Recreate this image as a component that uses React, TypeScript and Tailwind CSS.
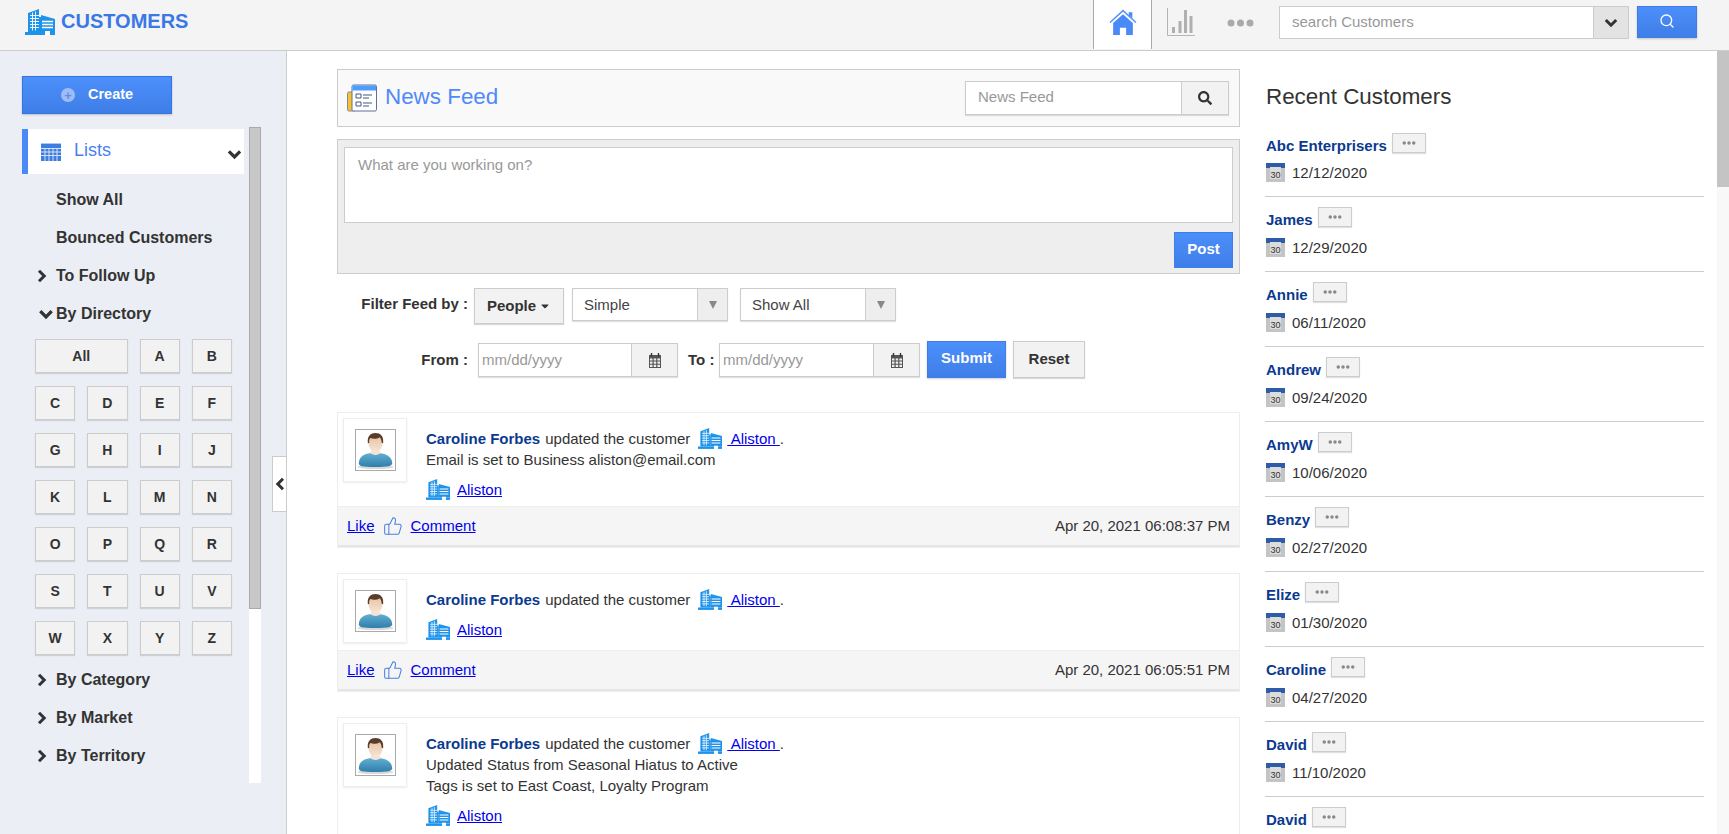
import { Search, ThumbsUp } from 'lucide-react'
import { FaSearch, FaCaretDown } from 'react-icons/fa'

const rows = [
  ['All', 'A', 'B'],
  ['C', 'D', 'E', 'F'],
  ['G', 'H', 'I', 'J'],
  ['K', 'L', 'M', 'N'],
  ['O', 'P', 'Q', 'R'],
  ['S', 'T', 'U', 'V'],
  ['W', 'X', 'Y', 'Z'],
]

const customers = [
  ['Abc Enterprisers', '12/12/2020'],
  ['James', '12/29/2020'],
  ['Annie', '06/11/2020'],
  ['Andrew', '09/24/2020'],
  ['AmyW', '10/06/2020'],
  ['Benzy', '02/27/2020'],
  ['Elize', '01/30/2020'],
  ['Caroline', '04/27/2020'],
  ['David', '11/10/2020'],
  ['David', ''],
]

function ChevronDown({ className }: { className: string }) {
  return (
    <svg viewBox="0 0 14 10" className={className}>
      <path d="M1.800 2 7 7.200 12.200 2" fill="none" stroke="currentColor" strokeWidth="3" />
    </svg>
  )
}

function ChevronRight({ className }: { className: string }) {
  return (
    <svg viewBox="0 0 10 14" className={className}>
      <path d="M2 1.800 7.200 7 2 12.200" fill="none" stroke="currentColor" strokeWidth="3" />
    </svg>
  )
}

function ChevronLeft({ className }: { className: string }) {
  return (
    <svg viewBox="0 0 10 14" className={className}>
      <path d="M8 1.800 2.800 7 8 12.200" fill="none" stroke="currentColor" strokeWidth="3" />
    </svg>
  )
}

function BuildingIcon({ className }: { className: string }) {
  return (
    <svg viewBox="0 0 30 26" className={className}>
      <path d="M3 23V4l11-4v8l2 0v15z" fill="#1f93ea" />
      <path d="M16 6l14 4v13H16z" fill="#1f93ea" />
      <path d="M0 23h30v3H0z" fill="#1f93ea" />
      <path d="M5 6.500h9M5 9.500h9M5 12.500h9M5 15.500h9M5 18.500h9" stroke="#fff" strokeWidth="0.9" />
      <path d="M7.500 3.500v18M10.500 2.500v19" stroke="#fff" strokeWidth="0.9" />
      <path d="M17 12.500h11M17 15.500h11M17 18.500h11" stroke="#fff" strokeWidth="1.300" />
      <path d="M20 22h5v4h-5z" fill="#fff" />
    </svg>
  )
}

function HomeIcon() {
  return (
    <svg viewBox="0 0 27 25" className="w-[28px] h-[26px]">
      <path d="M1 13 13.500 1.500 26 13" fill="none" stroke="#5a94f8" strokeWidth="1.500" />
      <path d="M19 3h3.500v6L19 6z" fill="#4a8af8" />
      <path d="M13.500 5 23 13.500V25h-6.500v-7h-6v7H4V13.500z" fill="#4a8af8" />
    </svg>
  )
}

function BarsIcon() {
  return (
    <svg viewBox="0 0 28 28" className="w-[28px] h-[28px]">
      <path d="M.5 0v27.500H28" fill="none" stroke="#b5b5b5" />
      <path d="M5 19h3v6H5zM11.500 13h3v12h-3zM17 2h3v23h-3zM22.500 8h3v17h-3z" fill="#b0b0b0" />
    </svg>
  )
}

function Dots({ className }: { className: string }) {
  return (
    <svg viewBox="0 0 27 8" className={className}>
      <circle cx="4" cy="4" r="3.500" fill="currentColor" />
      <circle cx="13.500" cy="4" r="3.500" fill="currentColor" />
      <circle cx="23" cy="4" r="3.500" fill="currentColor" />
    </svg>
  )
}

function NewsIcon() {
  return (
    <svg viewBox="0 0 30 28" className="w-[30px] h-[28px]">
      <rect x="0.500" y="8" width="8" height="19" rx="1.500" fill="#fbc02d" stroke="#7d8aa5" />
      <rect x="5" y="1" width="24.500" height="26" rx="1.500" fill="#fff" stroke="#5b7199" />
      <path d="M5.500 1.500h23.500v5H5.500z" fill="#4f9cff" />
      <path d="M9 10h5v4H9zM9 18h5v4H9z" fill="#fff" stroke="#44597f" />
      <path d="M16 11h9M16 14h6M16 19h9M16 22h6" stroke="#44597f" strokeWidth="1.200" />
    </svg>
  )
}

function ListIcon() {
  return (
    <svg viewBox="0 0 20 18" className="w-[20px] h-[18px]">
      <path d="M0 0h20v18H0z" fill="#3d7ddf" />
      <path d="M0 .500h20" stroke="#a9c6f5" />
      <path d="M0 5.500h20M0 9h20M0 12.500h20M4 5v13M8 5v13M12 5v13M16 5v13" stroke="#e2ecfb" strokeWidth="0.900" />
    </svg>
  )
}

function SmallCalendar() {
  return (
    <svg viewBox="0 0 19 19" className="w-[19px] h-[19px] shrink-0 -mt-[1px]">
      <path d="M0 0h19v19H0z" fill="#c4c4c4" />
      <path d="M0 0h19v5H0z" fill="#2f5ca8" />
      <path d="M4 4h11v12H4z" fill="#dcdcdc" />
      <text x="9.500" y="15" textAnchor="middle" fontSize="9" fill="#333" fontFamily="Liberation Sans, sans-serif">30</text>
    </svg>
  )
}

function GridCalendar() {
  return (
    <svg viewBox="0 0 14 15" className="w-[14px] h-[15px]">
      <path d="M1 2h12v13H1z" fill="#555" />
      <path d="M2 5.500h2.500v2H2zM5.700 5.500h2.500v2H5.700zM9.400 5.500h2.600v2H9.400zM2 8.500h2.500v2.200H2zM5.700 8.500h2.500v2.200H5.700zM9.400 8.500h2.600v2.200H9.400zM2 11.700h2.500V14H2zM5.700 11.700h2.500V14H5.700zM9.400 11.700h2.600V14H9.400z" fill="#eee" />
      <path d="M3.500 0v3.500M10.500 0v3.500" stroke="#333" strokeWidth="1.400" />
    </svg>
  )
}

function Avatar() {
  return (
    <div className="w-[64px] h-[64px] shrink-0 bg-white border border-[#eeeeee] shadow-[0_1px_2px_rgba(0,0,0,0.08)] flex items-center justify-center">
      <svg viewBox="0 0 41 42" className="w-[41px] h-[42px] border border-[#aaaaaa]">
        <defs>
          <linearGradient id="shirt" x1="0" y1="0" x2="0" y2="1">
            <stop offset="0" stopColor="#63b0d4" />
            <stop offset="1" stopColor="#2f7ea8" />
          </linearGradient>
          <linearGradient id="face" x1="0" y1="0" x2="0" y2="1">
            <stop offset="0" stopColor="#e3bd9c" />
            <stop offset="1" stopColor="#f7e6d6" />
          </linearGradient>
        </defs>
        <rect width="41" height="42" fill="#fff" />
        <ellipse cx="20.500" cy="39" rx="19" ry="2" fill="#d8d8d8" />
        <path d="M3 35c0-7 6-11 17-11s18 4 18 11c0 3-4 4-18 4S3 38 3 35z" fill="url(#shirt)" />
        <path d="M15 24c2 3 9 3 11 0l-2-4h-7z" fill="#f5e4d4" />
        <ellipse cx="20.500" cy="13.500" rx="7.500" ry="9.500" fill="url(#face)" />
        <path d="M12.500 14c-1-8 3-11 8-11s9 3 8 11l-1.500-.5c0-3-1-5-2-6-3 2-7 2-10 1-1 1-1.500 3-1 5z" fill="#5a3c28" />
      </svg>
    </div>
  )
}

function SideItem({ label, open, plain }: { label: string; open?: boolean; plain?: boolean }) {
  return (
    <div className="h-[38px] flex items-center text-[16px] font-bold text-[#333333]">
      <span className="w-[34px] pl-[15px] shrink-0 flex justify-start">
        {!plain && (open ? <ChevronDown className="w-[16px] h-[11px] ml-[1px] shrink-0" /> : <ChevronRight className="w-[10px] h-[14px]" />)}
      </span>
      {label}
    </div>
  )
}

function Select({ label }: { label: string }) {
  return (
    <div className="w-[156px] h-[33px] flex bg-white border border-[#cccccc] shadow-[0_1px_1px_rgba(0,0,0,0.12)]">
      <span className="flex-1 pl-[11px] pt-[2px] flex items-center text-[15px] text-[#444444]">{label}</span>
      <span className="w-[30px] bg-[#eeeeee] border-l border-[#cccccc] flex items-center justify-center">
        <span className="w-0 h-0 border-x-[4px] border-x-transparent border-t-[8px] border-t-[#888888]" />
      </span>
    </div>
  )
}

function DateInput({ className }: { className: string }) {
  return (
    <div className={`${className} h-[34px] mt-[2px] flex bg-white border border-[#cccccc] shadow-[0_1px_1px_rgba(0,0,0,0.12)]`}>
      <input placeholder="mm/dd/yyyy" className="min-w-0 flex-1 pl-[3px] text-[15px] outline-none placeholder:text-[#999999]" />
      <span className="w-[46px] bg-[#f2f2f2] border-l border-[#cccccc] flex items-center justify-center">
        <GridCalendar />
      </span>
    </div>
  )
}

function FeedCard({ lines, date }: { lines: string[]; date?: string }) {
  return (
    <div className="mb-[25px] border border-[#eeeeee]">
      <div className={`flex min-h-[76px] pt-[5px] pl-[5px] ${date ? '' : 'pb-[10px]'}`}>
        <Avatar />
        <div className="ml-[19px] pt-[10px] pb-[5px] text-[15px] leading-[21px] text-[#333333]">
          <div className="flex items-center h-[21px]">
            <span className="font-bold text-[#0b3a8f]">Caroline Forbes</span>
            <span className="ml-[5px]">updated the customer</span>
            <BuildingIcon className="ml-[8px] w-[24px] h-[21px]" />
            <a href="#" className="ml-[5px] text-[#0000ee] underline whitespace-pre"> Aliston </a>
            <span>.</span>
          </div>
          {lines.map((line) => (
            <div key={line} className="h-[21px]">{line}</div>
          ))}
          <div className="mt-[7px] flex items-center h-[24px]">
            <BuildingIcon className="w-[24px] h-[21px]" />
            <a href="#" className="ml-[7px] text-[#0000ee] underline">Aliston</a>
          </div>
        </div>
      </div>
      {date && (
        <div className="h-[41px] flex items-center pl-[9px] pr-[9px] bg-[#f5f5f5] border-t border-[#eeeeee] border-b-2 border-b-[#e6e6e6] text-[15px]">
          <a href="#" className="text-[#0000ee] underline">Like</a>
          <ThumbsUp className="ml-[8px] w-[20px] h-[20px] text-[#4a80e0]" strokeWidth={1.25} />
          <a href="#" className="ml-[8px] text-[#0000ee] underline">Comment</a>
          <span className="ml-auto text-[#333333]">{date}</span>
        </div>
      )}
    </div>
  )
}

export default function App() {
  return (
    <div className="w-[1729px] h-[834px] overflow-hidden flex flex-col bg-white font-['Liberation_Sans',Arial,sans-serif] text-[#333333]">
      <header className="h-[51px] shrink-0 flex bg-[#f4f4f4] border-b border-[#cccccc]">
        <div className="pl-[25px] flex items-start pt-[9px]">
          <BuildingIcon className="w-[30px] h-[26px]" />
          <span className="ml-[6px] -mt-[1px] text-[20px] leading-[26px] font-bold text-[#3a78e8]">CUSTOMERS</span>
        </div>
        <div className="ml-auto flex items-start pr-[32px]">
          <div className="w-[59px] h-[49px] bg-white border-x border-[#aaaaaa] flex justify-center pt-[9px]">
            <HomeIcon />
          </div>
          <div className="ml-[15px] mt-[8px]"><BarsIcon /></div>
          <div className="ml-[32px] mt-[19px] text-[#aaaaaa]"><Dots className="w-[27px] h-[8px]" /></div>
          <div className="ml-[25px] mt-[6px] w-[350px] h-[33px] flex bg-white border border-[#cccccc]">
            <input placeholder="search Customers" className="min-w-0 flex-1 pl-[12px] text-[15px] outline-none placeholder:text-[#999999]" />
            <span className="w-[35px] bg-[#e3e3e3] border-l border-[#cccccc] flex items-center justify-center">
              <ChevronDown className="w-[14px] h-[10px] text-[#333333]" />
            </span>
          </div>
          <button className="ml-[8px] mt-[6px] w-[60px] h-[32px] flex items-center justify-center pb-[2px] bg-linear-to-b from-[#4c8ffb] to-[#3f7ee8] border border-[#3f7ee8] shadow-[0_1px_2px_rgba(0,0,0,0.2)]">
            <Search className="w-[16px] h-[16px] text-white" strokeWidth={2} />
          </button>
        </div>
      </header>

      <div className="flex-1 min-h-0 flex">
        <aside className="relative w-[287px] shrink-0 pl-[22px] pt-[25px] bg-[#ebeef4] border-r border-[#cccccc]">
          <button className="w-[150px] h-[38px] flex items-center pl-[38px] bg-linear-to-b from-[#4c8ffb] to-[#3f7ee8] border border-[#3274e6] shadow-[0_1px_2px_rgba(0,0,0,0.2)] text-[14.5px] font-bold text-white">
            <span className="w-[14px] h-[14px] rounded-full bg-[#9dbdf5] flex items-center justify-center text-[13px] leading-none text-[#5c8fe8]">+</span>
            <span className="ml-[13px]">Create</span>
          </button>
          <div className="mt-[13px] flex h-[656px]">
            <div className="w-[222px] pt-[2px]">
              <div className="h-[45px] flex items-center bg-white border-l-[6px] border-[#4a8af8] pl-[13px] pr-[2px]">
                <ListIcon />
                <span className="ml-[13px] -mt-[2px] text-[18px] text-[#4a7ff0]">Lists</span>
                <ChevronDown className="ml-auto mt-[6px] w-[15px] h-[11px] text-[#333333]" />
              </div>
              <div className="mt-[7px]">
                <SideItem label="Show All" plain />
                <SideItem label="Bounced Customers" plain />
                <SideItem label="To Follow Up" />
                <SideItem label="By Directory" open />
              </div>
              <div className="mt-[6px] ml-[13px] w-[197px] grid grid-cols-4 gap-x-[12px] gap-y-[13px]">
                {rows.flat().map((key) => (
                  <button
                    key={key}
                    className={`h-[34px] flex items-center justify-center bg-[#f2f2f2] border border-[#cccccc] shadow-[0_1px_1px_rgba(0,0,0,0.12)] text-[14px] font-bold text-[#333333] ${key === 'All' ? 'col-span-2' : ''}`}
                  >
                    {key}
                  </button>
                ))}
              </div>
              <div className="mt-[6px]">
                <SideItem label="By Category" />
                <SideItem label="By Market" />
                <SideItem label="By Territory" />
              </div>
            </div>
            <div className="ml-[5px] w-[12px] bg-white">
              <div className="h-[482px] bg-[#c8c8c8] border border-[#aaaaaa]" />
            </div>
          </div>
          <div className="absolute left-[272px] top-[405px] w-[14px] h-[56px] bg-white border-l border-y border-[#cccccc] flex items-center justify-center">
            <ChevronLeft className="w-[10px] h-[14px] text-[#333333]" />
          </div>
        </aside>

        <main className="w-[903px] ml-[50px] shrink-0 pt-[18px]">
          <div className="h-[58px] flex items-center bg-[#f9f9f9] border border-[#cccccc] pl-[9px] pr-[10px]">
            <NewsIcon />
            <h1 className="ml-[8px] -mt-[2px] text-[22.4px] text-[#4f8af8]">News Feed</h1>
            <div className="ml-auto -mt-[1px] w-[264px] h-[34px] flex bg-white border border-[#cccccc] shadow-[0_1px_1px_rgba(0,0,0,0.12)]">
              <input placeholder="News Feed" className="min-w-0 flex-1 pl-[12px] text-[15px] outline-none placeholder:text-[#999999]" />
              <span className="w-[47px] bg-[#f2f2f2] border-l border-[#cccccc] flex items-center justify-center">
                <FaSearch className="w-[14px] h-[14px] text-[#333333]" />
              </span>
            </div>
          </div>

          <div className="mt-[12px] h-[135px] bg-[#eeeeee] border border-[#cccccc] pt-[7px] px-[6px]">
            <textarea placeholder="What are you working on?" className="block w-full h-[76px] resize-none bg-white border border-[#cccccc] px-[13px] py-[6px] text-[15px] outline-none placeholder:text-[#999999]" />
            <div className="mt-[9px] flex justify-end">
              <button className="w-[59px] h-[36px] pb-[2px] bg-linear-to-b from-[#4c8ffb] to-[#3f7ee8] border border-[#3f7ee8] text-[15px] font-bold text-white">Post</button>
            </div>
          </div>

          <div className="mt-[14px] flex items-start h-[37px]">
            <label className="w-[131px] h-[33px] flex items-center justify-end text-[15px] font-bold">Filter Feed by :</label>
            <button className="ml-[6px] w-[90px] h-[36px] flex items-center justify-center bg-[#f2f2f2] border border-[#cccccc] shadow-[0_1px_1px_rgba(0,0,0,0.15)] text-[15px] font-bold">
              People
              <FaCaretDown className="ml-[3px] w-[12px] h-[12px]" />
            </button>
            <div className="ml-[8px]"><Select label="Simple" /></div>
            <div className="ml-[12px]"><Select label="Show All" /></div>
          </div>

          <div className="mt-[16px] flex items-start h-[37px]">
            <label className="w-[131px] h-[38px] flex items-center justify-end text-[15px] font-bold">From :</label>
            <DateInput className="ml-[10px] w-[200px]" />
            <label className="ml-[10px] w-[24px] h-[38px] flex items-center whitespace-nowrap text-[15px] font-bold">To :</label>
            <DateInput className="ml-[7px] w-[201px]" />
            <button className="ml-[7px] w-[79px] h-[37px] pb-[2px] bg-linear-to-b from-[#4c8ffb] to-[#3f7ee8] border border-[#3f7ee8] shadow-[0_1px_2px_rgba(0,0,0,0.2)] text-[15px] font-bold text-white">Submit</button>
            <button className="ml-[7px] w-[72px] h-[37px] bg-[#f2f2f2] border border-[#cccccc] shadow-[0_1px_1px_rgba(0,0,0,0.15)] text-[15px] font-bold">Reset</button>
          </div>

          <div className="mt-[34px]">
            <FeedCard lines={['Email is set to Business aliston@email.com']} date="Apr 20, 2021 06:08:37 PM" />
            <FeedCard lines={[]} date="Apr 20, 2021 06:05:51 PM" />
            <FeedCard lines={['Updated Status from Seasonal Hiatus to Active', 'Tags is set to East Coast, Loyalty Program']} />
          </div>
        </main>

        <section className="w-[439px] ml-[25px] shrink-0">
          <h2 className="pt-[32px] h-[71px] text-[22.4px] leading-[28px] pl-px text-[#333333]">Recent Customers</h2>
          {customers.map(([name, date], i) => (
            <div key={i} className={`h-[75px] border-b border-[#cccccc] ${i === 0 ? 'pt-[13px]' : 'pt-[12px]'}`}>
              <div className="h-[22px] flex items-center pl-px">
                <span className="text-[15px] font-bold text-[#0b3a8f]">{name}</span>
                <span className="ml-[5px] -mt-[6px] w-[34px] h-[20px] bg-[#f2f2f2] border border-[#cccccc] shadow-[0_1px_1px_rgba(0,0,0,0.12)] flex items-center justify-center text-[#888888]">
                  <Dots className="w-[16px] h-[4px]" />
                </span>
              </div>
              {date && (
                <div className={`h-[22px] flex items-center pl-px text-[15px] text-[#333333] ${i === 0 ? 'mt-[5px]' : 'mt-[6px]'}`}>
                  <SmallCalendar />
                  <span className="ml-[7px]">{date}</span>
                </div>
              )}
            </div>
          ))}
        </section>

        <div className="ml-[13px] w-[12px] shrink-0 bg-[#f8f8f8]">
          <div className="h-[136px] bg-[#c4c4c4]" />
        </div>
      </div>
    </div>
  )
}
